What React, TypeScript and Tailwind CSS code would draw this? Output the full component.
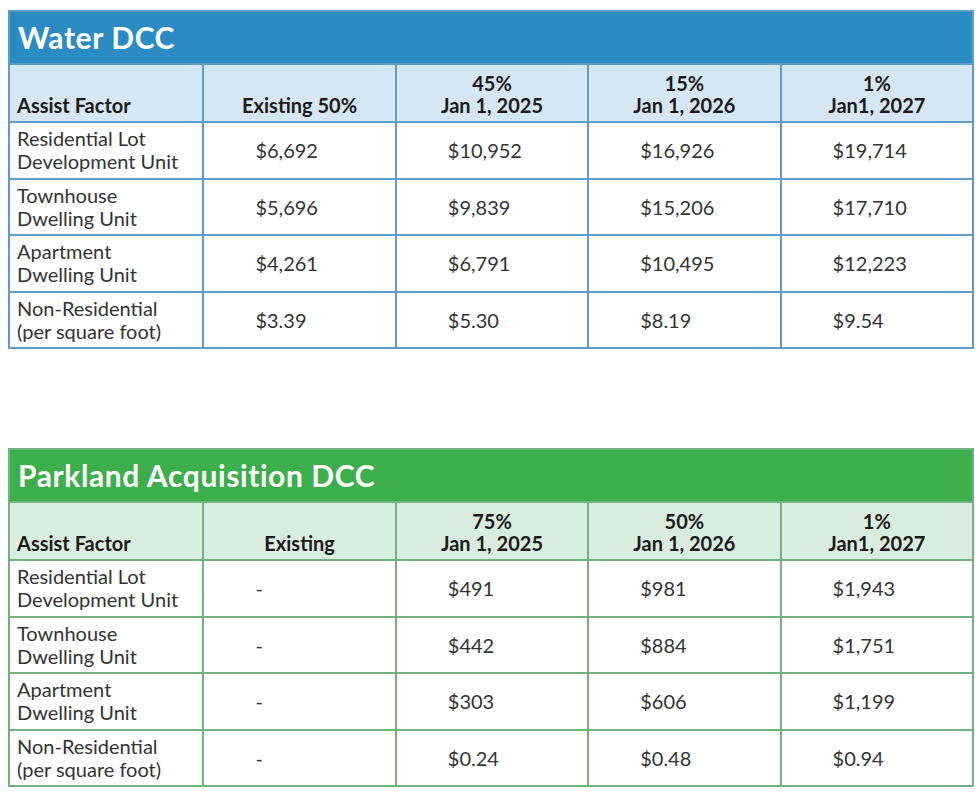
type Theme = {
  title: string;
  head: string;
  line: string;
};

const blue: Theme = {
  title: "bg-[#2b8bc3]",
  head: "bg-[#d5e7f4]",
  line: "border-[#5f9cc7]",
};

const green: Theme = {
  title: "bg-[#3dae4c]",
  head: "bg-[#d8eddd]",
  line: "border-[#72b27e]",
};

const rowLabels = [
  ["Residential Lot", "Development Unit"],
  ["Townhouse", "Dwelling Unit"],
  ["Apartment", "Dwelling Unit"],
  ["Non-Residential", "(per square foot)"],
];

function DccTable({
  title,
  theme,
  heads,
  rows,
  className,
}: {
  title: string;
  theme: Theme;
  heads: string[][];
  rows: string[][];
  className?: string;
}) {
  return (
    <section className={`border-2 ${theme.line} ${className ?? ""}`}>
      <h2
        className={`${theme.title} h-[51px] flex items-center px-[8px] text-[30px] font-bold text-white tracking-[0.6px]`}
      >
        {title}
      </h2>
      <div className={`grid grid-cols-5 border-t-2 ${theme.line}`}>
        <div
          className={`${theme.head} h-[56px] flex items-end px-[7px] pb-[5px] text-[20px] font-bold text-[#1b1b1b] leading-[22px]`}
        >
          Assist Factor
        </div>
        {heads.map((h, i) => (
          <div
            key={i}
            className={`${theme.head} h-[56px] flex flex-col justify-end items-center pb-[5px] border-l-2 ${theme.line} text-[20px] font-bold text-[#1b1b1b] leading-[22px]`}
          >
            {h.map((t) => (
              <span key={t}>{t}</span>
            ))}
          </div>
        ))}
        {rows.map((r, ri) => (
          <div key={ri} className="contents">
            <div
              className={`h-[56.5px] flex flex-col justify-center px-[7px] border-t-2 ${theme.line} text-[20px] text-[#333333] leading-[23px]`}
            >
              <span>{rowLabels[ri][0]}</span>
              <span>{rowLabels[ri][1]}</span>
            </div>
            {r.map((v, vi) => (
              <div
                key={vi}
                className={`h-[56.5px] flex items-center pl-[51px] border-t-2 border-l-2 ${theme.line} text-[20px] text-[#333333]`}
              >
                {v}
              </div>
            ))}
          </div>
        ))}
      </div>
    </section>
  );
}

export default function App() {
  return (
    <main className="w-[980px] h-[794px] bg-white pt-[10px] pl-[8px] pr-[6px] font-['Lato',sans-serif]">
      <DccTable
        title="Water DCC"
        theme={blue}
        heads={[
          ["Existing 50%"],
          ["45%", "Jan 1, 2025"],
          ["15%", "Jan 1, 2026"],
          ["1%", "Jan1, 2027"],
        ]}
        rows={[
          ["$6,692", "$10,952", "$16,926", "$19,714"],
          ["$5,696", "$9,839", "$15,206", "$17,710"],
          ["$4,261", "$6,791", "$10,495", "$12,223"],
          ["$3.39", "$5.30", "$8.19", "$9.54"],
        ]}
      />
      <DccTable
        title="Parkland Acquisition DCC"
        theme={green}
        className="mt-[99px]"
        heads={[
          ["Existing"],
          ["75%", "Jan 1, 2025"],
          ["50%", "Jan 1, 2026"],
          ["1%", "Jan1, 2027"],
        ]}
        rows={[
          ["-", "$491", "$981", "$1,943"],
          ["-", "$442", "$884", "$1,751"],
          ["-", "$303", "$606", "$1,199"],
          ["-", "$0.24", "$0.48", "$0.94"],
        ]}
      />
    </main>
  );
}
